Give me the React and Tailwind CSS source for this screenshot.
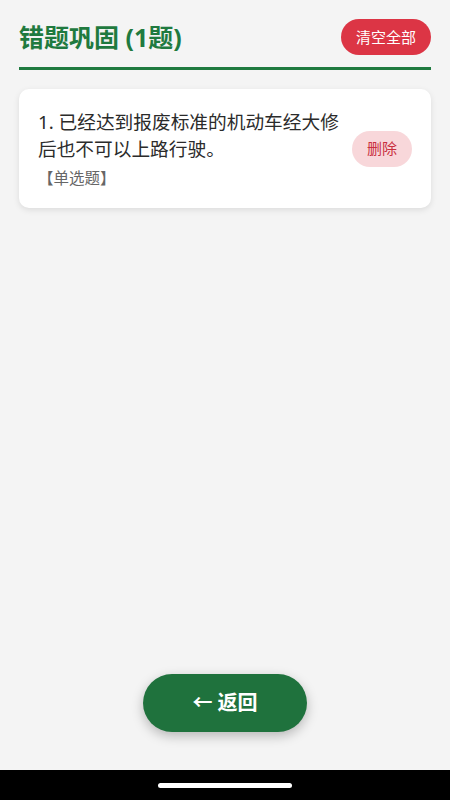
export default function App() {
  return (
    <div
      className="flex h-[800px] w-[450px] flex-col bg-[#f4f4f4] text-[#333]"
      style={{ fontFamily: '"Noto Sans", "Noto Sans CJK SC", sans-serif' }}
    >
      <div className="flex-1 px-[19px] pt-[19px]">
        <div className="flex h-[36px] items-center justify-between">
          <h1 className="text-[25px] font-bold leading-none text-[#1f7a3f]">错题巩固 (1题)</h1>
          <button className="h-[36px] rounded-full bg-[#dc3545] px-[15px] text-[15px] text-white">
            清空全部
          </button>
        </div>
        <div className="mt-[12px] h-[3px] bg-[#1f7a3f]" />

        <div className="mt-[19px] flex items-center gap-[10px] rounded-[10px] bg-white px-[19px] py-[19px] shadow-[0_2px_6px_rgba(0,0,0,0.1)]">
          <div className="flex-1">
            <p className="text-[18.7px] leading-[27px] text-[#2b2b2b]">1. 已经达到报废标准的机动车经大修后也不可以上路行驶。</p>
            <p className="mt-[5px] text-[15.5px] leading-[22px] text-[#666]">【单选题】</p>
          </div>
          <button className="h-[36px] w-[60px] rounded-full bg-[#f8d7da] text-[15px] text-[#c9303e]">
            删除
          </button>
        </div>
      </div>

      <div className="flex justify-center pb-[38px]">
        <button className="h-[58px] w-[164px] rounded-full bg-[#1f723d] text-[20px] font-bold text-white shadow-[0_4px_12px_rgba(0,0,0,0.25)]">
          ← 返回
        </button>
      </div>

      <div className="flex h-[30px] items-center justify-center bg-black">
        <div className="h-[5px] w-[134px] rounded-full bg-white" />
      </div>
    </div>
  );
}
